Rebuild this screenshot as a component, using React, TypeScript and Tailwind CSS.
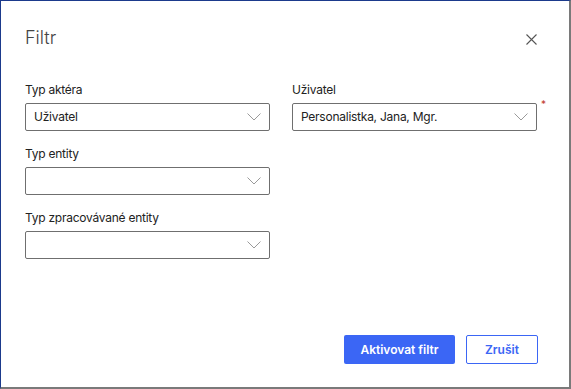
import React from "react";

const Chevron = () => (
  <svg width="14" height="8" viewBox="0 0 14 8" fill="none" className="shrink-0">
    <path d="M0.5 0.5 L7 7 L13.5 0.5" stroke="#9a9a9a" strokeWidth="1" />
  </svg>
);

const Select = ({ value }: { value?: string }) => (
  <div className="h-[28px] w-[245px] border border-[#6f6f6f] rounded-[2px] flex items-center justify-between pl-[8px] pr-[8px] bg-white">
    <span className="text-[12px] tracking-[-0.25px] text-[#222] leading-none">{value}</span>
    <Chevron />
  </div>
);

const Field = ({ label, value, required }: { label: string; value?: string; required?: boolean }) => (
  <div className="flex flex-col relative">
    <div className="text-[12px] tracking-[-0.25px] leading-[16px] text-[#222] mb-[5px]">{label}</div>
    <Select value={value} />
    {required && (
      <span className="absolute left-[249px] top-[17px] text-[#c0392b] text-[10px] leading-none">*</span>
    )}
  </div>
);

export default function App() {
  return (
    <div
      className="w-[571px] h-[389px] bg-white border-t border-l border-[#1b3a8c] border-r-2 border-b-2 border-r-[#7a7a7a] border-b-[#7a7a7a] relative"
      style={{ fontFamily: "Inter, 'Liberation Sans', sans-serif" }}
    >
      <div className="flex items-center justify-between pl-[24px] pr-[32px] pt-[26px]">
        <h1 className="text-[18px] leading-[22px] font-light text-[#444]">Filtr</h1>
        <svg width="11" height="11" viewBox="0 0 11 11" className="mt-[2px]">
          <path d="M0.5 0.5 L10.5 10.5 M10.5 0.5 L0.5 10.5" stroke="#555" strokeWidth="1.1" />
        </svg>
      </div>
      <div className="pl-[24px] pt-[33px] grid grid-cols-[245px_245px] gap-x-[22px]">
        <div className="flex flex-col gap-[15px]">
          <Field label="Typ aktéra" value="Uživatel" />
          <Field label="Typ entity" />
          <Field label="Typ zpracovávané entity" />
        </div>
        <div className="flex flex-col">
          <Field label="Uživatel" value="Personalistka, Jana, Mgr." required />
        </div>
      </div>
      <div className="absolute right-[31px] bottom-[23px] flex gap-[11px]">
        <button className="h-[29px] w-[111px] bg-[#3b66f5] rounded-[2px] text-white text-[12px] font-semibold">
          Aktivovat filtr
        </button>
        <button className="h-[29px] w-[72px] bg-white border border-[#3b66f5] rounded-[2px] text-[#3b66f5] text-[12px] font-semibold">
          Zrušit
        </button>
      </div>
    </div>
  );
}
